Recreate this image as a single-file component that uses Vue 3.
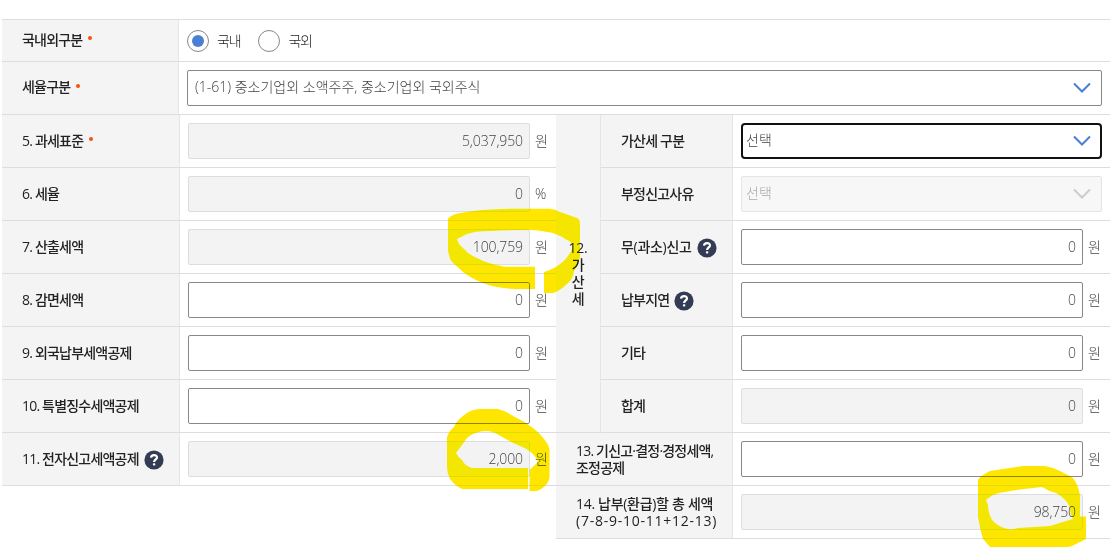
<script setup>
import { ref } from 'vue';

const region = ref('in')

const leftRows = [
    { label: '5. 과세표준', required: true, value: '5,037,950', unit: '원', readonly: true },
    { label: '6. 세율', value: '0', unit: '%', readonly: true },
    { label: '7. 산출세액', value: '100,759', unit: '원', readonly: true },
    { label: '8. 감면세액', value: '0', unit: '원' },
    { label: '9. 외국납부세액공제', value: '0', unit: '원' },
    { label: '10. 특별징수세액공제', value: '0', unit: '원' },
    { label: '11. 전자신고세액공제', help: true, value: '2,000', unit: '원', readonly: true },
]

const penaltyRows = [
    { label: '가산세 구분', select: true, focused: true },
    { label: '부정신고사유', select: true, disabled: true },
    { label: '무(과소)신고', wide: true, help: true, value: '0' },
    { label: '납부지연', help: true, value: '0' },
    { label: '기타', value: '0' },
    { label: '합계', value: '0', readonly: true },
]

const totalRows = [
    { title: '13. 기신고·결정·경정세액,', note: '조정공제', value: '0' },
    { title: '14. 납부(환급)할 총 세액', wide: true, formula: '(7-8-9-10-11+12-13)', value: '98,750', readonly: true },
]
</script>

<template>
    <div class="tax-form">
        <div class="row row_short">
            <div class="label label_top"><span>국내외구분</span><i class="required"></i></div>
            <div class="cell cell_radio">
                <label class="radio" @click="region = 'in'">
                    <span class="radio__circle" :class="{ '_checked': region === 'in' }"></span>국내
                </label>
                <label class="radio" @click="region = 'out'">
                    <span class="radio__circle" :class="{ '_checked': region === 'out' }"></span>국외
                </label>
            </div>
        </div>
        <div class="row">
            <div class="label label_top"><span>세율구분</span><i class="required"></i></div>
            <div class="cell">
                <div class="select">
                    <span>(1-61) 중소기업외 소액주주, 중소기업외 국외주식</span>
                    <svg class="chevron" viewBox="0 0 18 12">
                        <path d="M1 1.5 9 9.5 17 1.5" />
                    </svg>
                </div>
            </div>
        </div>

        <div class="columns">
            <div class="left">
                <div v-for="row in leftRows" :key="row.label" class="row">
                    <div class="label">
                        <span>{{ row.label }}</span>
                        <i v-if="row.required" class="required"></i>
                        <svg v-if="row.help" class="help" viewBox="0 0 20 20">
                            <circle cx="10" cy="10" r="9.6" />
                            <path d="M7 7.6C7.2 4.2 13 4.3 13 7.4 13 9.4 10.1 9.600 10.1 12" />
                            <rect x="8.9" y="13.2" width="2.4" height="2.4" rx=".8" />
                        </svg>
                    </div>
                    <div class="cell">
                        <div class="input" :class="{ '_readonly': row.readonly }">{{ row.value }}</div>
                        <span class="unit">{{ row.unit }}</span>
                    </div>
                </div>
            </div>

            <div class="right">
                <div class="penalty">
                    <div class="group"><span>12.</span><span>가</span><span>산</span><span>세</span></div>
                    <div class="penalty__rows">
                        <div v-for="row in penaltyRows" :key="row.label" class="row">
                            <div class="label label_penalty">
                                <span :class="{ 'wide': row.wide }">{{ row.label }}</span>
                                <svg v-if="row.help" class="help" viewBox="0 0 20 20">
                                    <circle cx="10" cy="10" r="9.6" />
                                    <path d="M7 7.6C7.2 4.2 13 4.3 13 7.4 13 9.4 10.1 9.600 10.1 12" />
                                    <rect x="8.9" y="13.2" width="2.4" height="2.4" rx=".8" />
                                </svg>
                            </div>
                            <div class="cell">
                                <div v-if="row.select" class="select"
                                    :class="{ '_focused': row.focused, '_disabled': row.disabled }">
                                    <span>선택</span>
                                    <svg class="chevron" viewBox="0 0 18 12">
                                        <path d="M1 1.5 9 9.5 17 1.5" />
                                    </svg>
                                </div>
                                <template v-else>
                                    <div class="input" :class="{ '_readonly': row.readonly }">{{ row.value }}</div>
                                    <span class="unit">원</span>
                                </template>
                            </div>
                        </div>
                    </div>
                </div>
                <div v-for="row in totalRows" :key="row.title" class="row">
                    <div class="label label_total">
                        <span :class="{ 'wide': row.wide }">{{ row.title }}</span>
                        <span v-if="row.note">{{ row.note }}</span>
                        <span v-if="row.formula" class="formula">{{ row.formula }}</span>
                    </div>
                    <div class="cell">
                        <div class="input" :class="{ '_readonly': row.readonly }">{{ row.value }}</div>
                        <span class="unit">원</span>
                    </div>
                </div>
            </div>
        </div>

        <!-- marker strokes over the amounts -->
        <svg class="marker" width="1119" height="555" viewBox="0 0 1119 555">
            <path d="M448 219Q450 215 458 213.500Q480 209 510 208.700H550Q555 209 560 212L577 218Q580 219 580 224V257Q577 267 574 271Q573 279 568 283Q560 291 553 293H544V272Q548 271 555 267.500Q564 262 568 256Q572 251 573 246Q572 242 566 239.500Q557 233 547 232Q538 230 530 230Q508 230 490 231Q475 231 467 234L457 239Q458 244 463 248Q469 255 477 258Q488 264 502 266L504 266.700H535V289H515Q494 288 483 283Q472 279 463 272L452 262Q449 258 448 250Z" />
            <path d="M447 437Q449 431 454 427Q457 420 463 416Q471 409 480 409H498Q506 411 513 416Q524 421 533 428Q540 433 544 439Q549 445 549.500 450V477Q549 482 545 486Q541 490 537 491H529.500V470L538 462Q536 457 532 453Q526 448 520 446Q507 440 497 434Q491 431 487 431Q479 431 473 434Q467 437 465 441L456 453Q458 457 462 460Q465 466 472 468H528V489H463Q456 487 450 479Q447 473 447 467Z" />
            <path fill-rule="evenodd" d="M978 480Q980 476 990 471L1023 466H1045L1053 468Q1065 473 1073 478Q1078 485 1079 491Q1080 494 1080 498V516.500H1086V539L1074 545Q1071 547 1067 547H990L983 539Q980 529 978 517ZM986 500Q991 495 999 493L1020 489.500 1042 487Q1048 491 1056 493Q1067 499 1070 508Q1070 514 1073 519Q1059 523 1050 526L1018 528Q1012 530 1008 529Q998 527 992 520Q988 513 988 505Z" />
        </svg>
    </div>
</template>

<style>
body {
    background: #fff;
}
</style>

<style scoped>
.tax-form {
    position: relative;
    box-sizing: border-box;
    width: 1119px;
    height: 555px;
    padding: 19px 9px 0 2px;
    overflow: hidden;
    background: #fff;
    color: #222;
    font-family: "Open Sans", "Noto Sans CJK KR", sans-serif;
    font-size: 14px;
    line-height: 17px;
}

.row {
    box-sizing: border-box;
    display: flex;
    height: 53px;
    border-bottom: 1px solid #ddd;
}

.row_short {
    height: 43px;
    border-top: 1px solid #ddd;
}

.label {
    box-sizing: border-box;
    display: flex;
    flex: none;
    align-items: center;
    width: 178px;
    padding: 0 0 2px 20px;
    border-right: 1px solid #e5e5e5;
    background: #f4f4f4;
    font-weight: 500;
    letter-spacing: -0.8px;
    white-space: nowrap;
}

.label_top {
    width: 177px;
    padding-bottom: 3px;
}

.label_penalty {
    width: 132px;
}

.label_total {
    flex-direction: column;
    align-items: flex-start;
    justify-content: center;
    width: 177px;
    padding-bottom: 1px;
}

.wide {
    letter-spacing: -0.3px;
}

.formula {
    letter-spacing: 0.75px;
}

.required {
    width: 4px;
    height: 4px;
    margin: -2px 0 0 6px;
    border-radius: 50%;
    background: #f4520b;
}

.help {
    width: 20px;
    height: 20px;
    margin: 3px 0 0 5px;
    fill: #343c55;
}

.help path {
    fill: none;
    stroke: #fff;
    stroke-width: 2.2;
}

.help rect {
    fill: #fff;
}

.cell {
    display: flex;
    flex: 1;
    align-items: center;
    padding: 0 8px;
    color: #444;
    font-weight: 300;
}

.cell_radio {
    gap: 18px;
}

.radio {
    display: flex;
    align-items: center;
    gap: 8px;
    color: #222;
    letter-spacing: -1.2px;
}

.radio__circle {
    box-sizing: border-box;
    display: grid;
    width: 22px;
    height: 22px;
    border: 1px solid #888;
    border-radius: 50%;
    place-content: center;
}

.radio__circle._checked::after {
    width: 12px;
    height: 12px;
    border-radius: 50%;
    background: #4a7fd4;
    content: "";
}

.input {
    box-sizing: border-box;
    width: 342px;
    height: 36px;
    padding: 8px 6px 0 0;
    border: 1px solid #888;
    border-radius: 2px;
    background: #fff;
    letter-spacing: -0.1px;
    text-align: right;
}

.input._readonly {
    border-color: #ddd;
    background: #f3f3f3;
}

.unit {
    margin: 0 0 2px 5px;
}

.select {
    box-sizing: border-box;
    display: flex;
    flex: 1;
    align-items: center;
    justify-content: space-between;
    height: 36px;
    padding: 0 10px 3px 7px;
    border: 1px solid #888;
    border-radius: 2px;
}

.select._focused {
    padding: 0 9px 3px 3px;
    border: 2px solid #111;
    border-radius: 4px;
}

.select._disabled {
    padding-left: 4px;
    border-color: #e5e5e5;
    background: #f7f7f7;
    color: #aaa;
}

.chevron {
    width: 18px;
    height: 12px;
    margin-top: 3px;
    fill: none;
    stroke: #4a7fd4;
    stroke-width: 2;
}

._disabled .chevron {
    stroke: #ccc;
}

.columns {
    display: flex;
    align-items: flex-start;
}

.left {
    width: 554px;
}

.right {
    width: 554px;
}

.penalty {
    display: flex;
}

.penalty__rows {
    flex: 1;
}

.group {
    box-sizing: border-box;
    display: flex;
    flex-direction: column;
    align-items: center;
    justify-content: center;
    width: 45px;
    padding-bottom: 2px;
    border-right: 1px solid #e5e5e5;
    border-bottom: 1px solid #ddd;
    background: #f4f4f4;
    font-weight: 500;
    letter-spacing: -0.3px;
}

.marker {
    position: absolute;
    top: 0;
    left: 0;
    fill: #ffe600;
    mix-blend-mode: darken;
    pointer-events: none;
}
</style>
